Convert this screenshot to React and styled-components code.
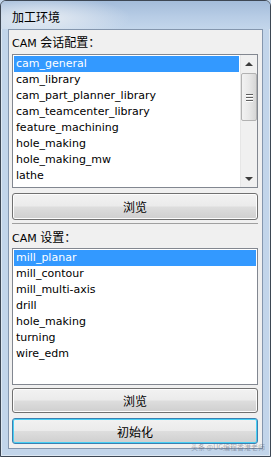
import styled, { createGlobalStyle } from "styled-components"

const GlobalStyle = createGlobalStyle`
    html, body {
        margin: 0;
        padding: 0;
        width: 271px;
        height: 457px;
        overflow: hidden;
        background: #c2d5ea;
    }
`

const uiFont = `"DejaVu Sans", "Noto Sans CJK SC", sans-serif`
const cjkFont = `"Noto Sans CJK SC", "DejaVu Sans", sans-serif`

const Window = styled.div`
    position: relative;
    box-sizing: border-box;
    width: 271px;
    height: 457px;
    display: flex;
    flex-direction: column;
    border: 1px solid #3d4754;
    border-radius: 6px 6px 0 0;
    background: #c2d5ea;
    box-shadow: inset 0 0 0 1px rgba(255,255,255,0.45);
    overflow: hidden;
`

const TitleBar = styled.div`
    height: 28px;
    flex: none;
    display: flex;
    align-items: center;
    padding: 4px 0 0 11px;
    box-sizing: border-box;
    background:
        radial-gradient(ellipse 90px 22px at 40px 17px, rgba(232,237,243,0.95), rgba(232,237,243,0) 100%),
        linear-gradient(180deg, #a3bcda 0%, #b7cce5 55%, #c3d6eb 100%);
`

const Title = styled.span`
    font-family: ${cjkFont};
    font-size: 12px;
    color: #000;
    line-height: 14px;
`

const Client = styled.div`
    flex: 1;
    margin: 0 7px 7px 7px;
    border: 1px solid #8496ad;
    background: #f0f0f0;
    display: flex;
    flex-direction: column;
    padding: 4px 4px 4px 3px;
    min-height: 0;
`

const Label = styled.div`
    height: 16px;
    line-height: 16px;
    font-family: ${uiFont};
    font-size: 11px;
    color: #000;
    margin-top: ${({$gap}) => $gap || 0}px;
    white-space: nowrap;
    span {
        font-family: ${cjkFont};
        font-size: 12px;
    }
`

const ListBox = styled.div`
    box-sizing: border-box;
    height: ${({$h}) => $h}px;
    margin-top: ${({$gap}) => $gap}px;
    border: 1px solid #828790;
    background: #fff;
    display: flex;
    flex: none;
    overflow: hidden;
`

const Items = styled.div`
    flex: 1;
    padding: 1px;
    overflow: hidden;
`

const Item = styled.div`
    height: 16px;
    line-height: 16px;
    padding-left: 2px;
    font-family: ${uiFont};
    font-size: 11px;
    white-space: nowrap;
    color: ${({$selected}) => $selected ? "#fff" : "#000"};
    background: ${({$selected}) => $selected ? "#3399ff" : "transparent"};
`

const ScrollBar = styled.div`
    width: 17px;
    flex: none;
    display: flex;
    flex-direction: column;
    background: #f0f0f0;
    border-left: 1px solid #e6e6e6;
    box-sizing: border-box;
`

const ArrowBtn = styled.div`
    height: 17px;
    display: flex;
    align-items: center;
    justify-content: center;
    flex: none;
`

const Triangle = styled.div`
    width: 0;
    height: 0;
    border-left: 4px solid transparent;
    border-right: 4px solid transparent;
    ${({$down}) => $down
        ? "border-top: 4px solid #3c3c3c;"
        : "border-bottom: 4px solid #3c3c3c;"}
`

const Track = styled.div`
    flex: 1;
    padding-top: 1px;
`

const Thumb = styled.div`
    height: 48px;
    box-sizing: border-box;
    border: 1px solid #b2b2b2;
    border-radius: 2px;
    background: linear-gradient(90deg, #f2f2f2 0%, #e8e8e8 50%, #d6d6d6 100%);
    display: flex;
    flex-direction: column;
    align-items: center;
    justify-content: center;
    gap: 2px;
`

const Grip = styled.div`
    width: 7px;
    height: 1px;
    background: #5f5f5f;
    box-shadow: 0 1px 0 #fff;
`

const Button = styled.div`
    box-sizing: border-box;
    height: ${({$h}) => $h}px;
    margin-top: ${({$gap}) => $gap}px;
    flex: none;
    border: 1px solid ${({$focused}) => $focused ? "#3c7fb1" : "#707070"};
    border-radius: 3px;
    box-shadow: inset 0 0 0 1px ${({$focused}) => $focused ? "#48d0f4" : "#fcfcfc"};
    background: linear-gradient(180deg, #f2f2f2 0%, #ebebeb 48%, #dddddd 52%, #cfcfcf 100%);
    display: flex;
    align-items: center;
    justify-content: center;
    font-family: ${cjkFont};
    font-size: 12px;
    color: #000;
`

const Separator = styled.div`
    height: 1px;
    margin: 3px 0 0 0;
    background: #a0a0a0;
    flex: none;
`

const Watermark = styled.div`
    position: absolute;
    right: 5px;
    bottom: 5px;
    font-family: ${cjkFont};
    font-size: 7px;
    line-height: 8px;
    color: rgba(80, 90, 110, 0.5);
    white-space: nowrap;
`

const libraries = [
    "cam_general",
    "cam_library",
    "cam_part_planner_library",
    "cam_teamcenter_library",
    "feature_machining",
    "hole_making",
    "hole_making_mw",
    "lathe",
    "lathe_mill",
]

const setups = [
    "mill_planar",
    "mill_contour",
    "mill_multi-axis",
    "drill",
    "hole_making",
    "turning",
    "wire_edm",
]

export default function App() {
    return (
        <>
            <GlobalStyle />
            <Window>
                <TitleBar>
                    <Title>加工环境</Title>
                </TitleBar>
                <Client>
                    <Label>CAM <span>会话配置：</span></Label>
                    <ListBox $h={134} $gap={4}>
                        <Items>
                            {libraries.map((name, i) => (
                                <Item key={name} $selected={i === 0}>{name}</Item>
                            ))}
                        </Items>
                        <ScrollBar>
                            <ArrowBtn><Triangle /></ArrowBtn>
                            <Track>
                                <Thumb>
                                    <Grip />
                                    <Grip />
                                    <Grip />
                                </Thumb>
                            </Track>
                            <ArrowBtn><Triangle $down /></ArrowBtn>
                        </ScrollBar>
                    </ListBox>
                    <Button $h={27} $gap={5}>浏览</Button>
                    <Separator />
                    <Label $gap={5}>CAM <span>设置：</span></Label>
                    <ListBox $h={137} $gap={3}>
                        <Items>
                            {setups.map((name, i) => (
                                <Item key={name} $selected={i === 0}>{name}</Item>
                            ))}
                        </Items>
                    </ListBox>
                    <Button $h={25} $gap={3}>浏览</Button>
                    <Button $h={26} $gap={5} $focused>初始化</Button>
                </Client>
                <Watermark>头条 @UG编程香港老师</Watermark>
            </Window>
        </>
    )
}
